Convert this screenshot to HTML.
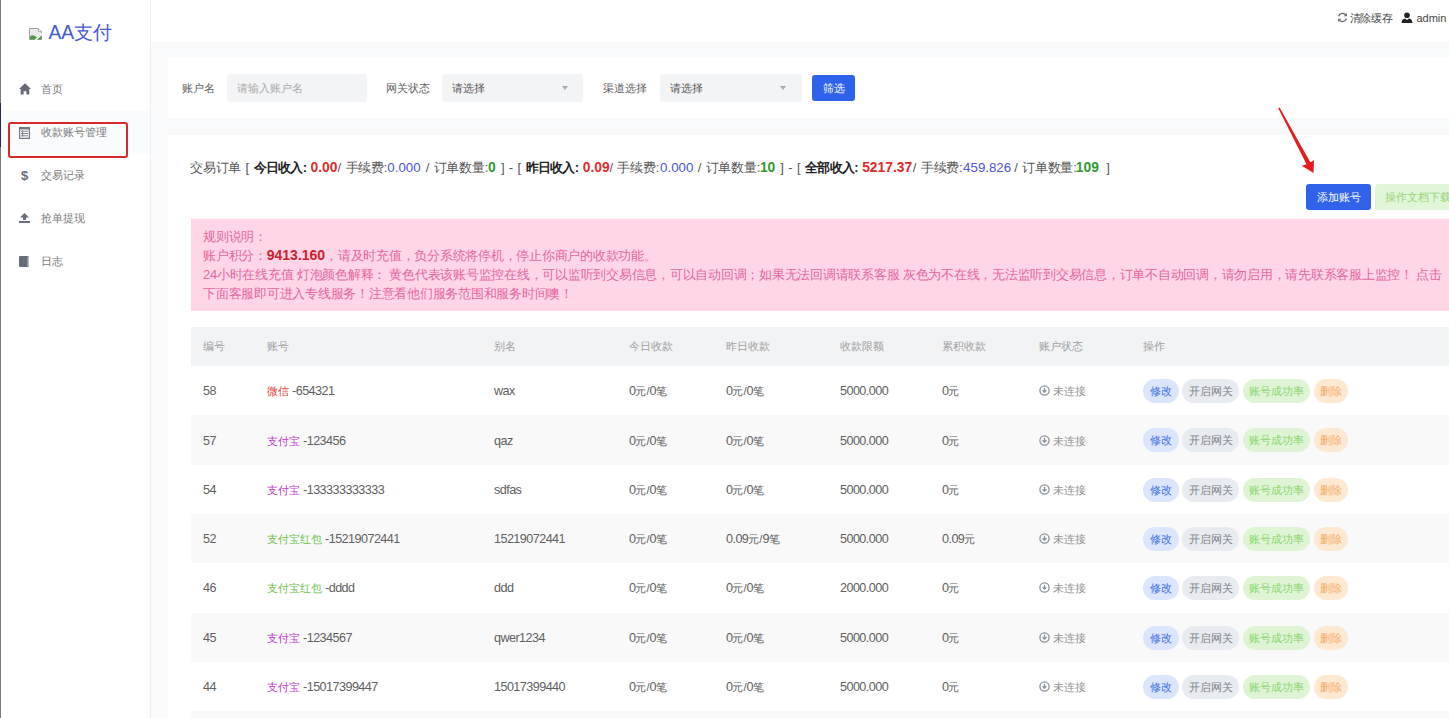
<!DOCTYPE html>
<html><head><meta charset="utf-8">
<style>
*{margin:0;padding:0;box-sizing:border-box}
html,body{width:1449px;height:718px;overflow:hidden;background:#fff;font-family:"Liberation Sans",sans-serif;color:#555}
.abs{position:absolute}
#leftline{position:absolute;left:0;top:0;width:1px;height:718px;background:#7a7a7a}
#side{position:absolute;left:1px;top:0;width:150px;height:718px;background:#fff;border-right:1px solid #f0f0f2}
#logo{position:absolute;left:47.5px;top:21px;font-size:19.3px;color:#4659d2;line-height:24px}
#bimg{position:absolute;left:28px;top:27.5px;width:13px;height:12px}
.nav{position:absolute;left:0;width:149px;height:43px;font-size:11px;color:#7a7a7a}
.nav .t{position:absolute;left:40px;top:0;line-height:43px}
.nav svg{position:absolute;left:17.5px;top:16px}
#header{position:absolute;left:151px;top:0;width:1298px;height:42px;background:#fff}
#content{position:absolute;left:151px;top:42px;width:1298px;height:676px;background:#f9fafc;border-top:6px solid #f9f9f9}
.card{position:absolute;background:#fff}
.lbl{position:absolute;font-size:11px;color:#606060;line-height:28px;top:74px}
.inp{position:absolute;top:74px;height:28px;background:#f3f4f6;border-radius:3px;font-size:11px;line-height:28px;padding-left:10px}
.tri{position:absolute;top:12px;width:0;height:0;border-left:3.5px solid transparent;border-right:3.5px solid transparent;border-top:4px solid #aaa}
.btn{position:absolute;border-radius:3px;font-size:11px;color:#fff;text-align:center}
#stats{position:absolute;left:0;top:158px;width:1449px;height:20px;font-size:13px;color:#555;line-height:20px;letter-spacing:-0.25px;word-spacing:1.25px}
.sc{position:absolute;top:0;white-space:pre}
.sc.red,.sc.grn{font-size:13.8px;letter-spacing:0}
.sc.blue{font-size:13.3px;letter-spacing:0}
#stats b{color:#222;letter-spacing:-0.7px}
.red{color:#e02b2b;font-weight:bold}
.blue{color:#4a55d8}
.grn{color:#2e9a2e;font-weight:bold}
#alert{position:absolute;left:191px;top:219px;width:1258px;height:92px;background:#ffd6e8;color:#e6679c;font-size:13px;letter-spacing:-0.25px;line-height:19px;padding:8px 0 0 12px;white-space:nowrap}
#alert b{color:#d0202e;font-size:14px;letter-spacing:0}
.thead{position:absolute;left:191px;width:1258px;height:39px;background:#f2f3f5}
.thead .c{position:absolute;top:0;line-height:39px;font-size:11px;color:#a0a0a0}
.tr{position:absolute;left:191px;width:1258px;height:49.3px;background:#fff}
.tr.alt{background:#f9f9f9}
.tr .c{position:absolute;top:1.3px;line-height:49px;font-size:11px;color:#606060;white-space:nowrap}
.tr .c i.n{font-style:normal;font-size:12.6px;letter-spacing:-0.55px}
.tr .c span{font-size:11px}
.tr .st{font-size:11px;color:#939393}
.tr .st svg{vertical-align:-1px}
.ops{position:absolute;top:13px;height:24px;white-space:nowrap;font-size:0}
.ops b{position:absolute;top:0;height:24px;line-height:24px;border-radius:12px;font-size:10.5px;font-weight:normal;text-align:center}
.b1{left:0;width:35.7px}.b2{left:39.2px;width:56.9px}.b3{left:99.5px;width:67.2px}.b4{left:171.3px;width:34.2px}
.b1{background:#dbe5fd;color:#3b6fe8}
.b2{background:#e8ebef;color:#7d838c}
.b3{background:#def4d5;color:#8bd46b}
.b4{background:#fde8d2;color:#f6aa62}
</style></head><body>
<div id="side">
  <svg id="bimg" viewBox="0 0 13 12"><path d="M0.5 0.5 H9.5 L12.5 3.5 V11.5 H0.5 Z" fill="#e9e9e9" stroke="#a0a0a0" stroke-width="1"/><path d="M1 11.5 V8.5 Q3 6.5 5 7.5 L8 9.5 L12.5 6 V11.5 Z" fill="#4f9a48"/><path d="M6 12.5 L13.5 5.5" stroke="#fff" stroke-width="1.4"/><path d="M9.5 0.5 V3.5 H12.5" fill="#fff" stroke="#a0a0a0" stroke-width="0.8"/></svg>
  <div id="logo">AA支付</div>
  <div class="nav" style="top:68px"><svg width="12" height="12" viewBox="0 0 12 12" style="left:17.5px;top:15px"><path d="M6 0.3 L12 6 H10.3 V11.5 H7.4 V8.2 H4.6 V11.5 H1.7 V6 H0 Z" fill="#666b76"/></svg><span class="t">首页</span></div>
  <div class="nav" style="top:111px;background:#fafbfc"><svg width="11" height="12" viewBox="0 0 11 12" style="left:17.5px;top:15.5px"><rect x="0.6" y="0.6" width="9.8" height="10.8" fill="none" stroke="#70757f" stroke-width="1.2"/><path d="M0.6 1.6h9.8" stroke="#70757f" stroke-width="1.6"/><path d="M2 4.2h7M2 6.5h7M2 8.8h7" stroke="#70757f" stroke-width="0.9"/><path d="M3.6 3.5v6" stroke="#70757f" stroke-width="0.9"/></svg><span class="t">收款账号管理</span></div>
  <div class="nav" style="top:154px"><svg width="11" height="12" viewBox="0 0 11 12" style="top:15px"><text x="5.5" y="10.5" text-anchor="middle" font-size="13" font-weight="bold" font-family="Liberation Sans" fill="#666b76">$</text></svg><span class="t">交易记录</span></div>
  <div class="nav" style="top:197px"><svg width="11" height="10" viewBox="0 0 11 10"><path d="M5.5 0 L10 4.5 H7 V7 H4 V4.5 H1Z M0 8 H11 V10 H0Z" fill="#666c78"/></svg><span class="t">抢单提现</span></div>
  <div class="nav" style="top:240px"><svg width="10" height="11" viewBox="0 0 10 11"><path d="M1 0 H9.5 V11 H1 Q0 11 0 10 V1 Q0 0 1 0Z" fill="#666c78"/><path d="M8.6 0.8 V10.2" stroke="#a8adb5" stroke-width="0.8"/></svg><span class="t">日志</span></div>
  <div class="abs" style="left:6.5px;top:122px;width:120px;height:36px;border:2px solid #d42a2a;border-radius:3px"></div>
</div>
<div id="leftline"></div><div class="abs" style="left:0;top:103px;width:1px;height:44px;background:#262a48"></div>
<div id="header">
  <div class="abs" style="left:1185.5px;top:11px;font-size:11px;color:#444;line-height:14px;white-space:nowrap">
    <svg width="11" height="11" viewBox="0 0 11 11" style="vertical-align:-1px"><path d="M9.2 3.5 A4.2 4.2 0 0 0 1.6 4.2 M1.8 7.5 A4.2 4.2 0 0 0 9.4 6.8" fill="none" stroke="#666" stroke-width="1.3"/><path d="M9.8 1 V4.2 H6.8Z M1.2 10 V6.8 H4.2Z" fill="#666"/></svg><span style="margin-left:2px;letter-spacing:-0.3px">清除缓存</span>
    <svg width="12" height="11" viewBox="0 0 12 11" style="vertical-align:-1px;margin-left:6px"><circle cx="6" cy="3.2" r="2.8" fill="#222"/><path d="M0.5 11 Q0.8 6.8 4 6.5 L6 8 L8 6.5 Q11.2 6.8 11.5 11Z" fill="#222"/></svg> admin
  </div>
</div>
<div id="content"></div>
<!-- filter card -->
<div class="card" style="left:168px;top:57px;width:1281px;height:61px"></div>
<span class="lbl" style="left:182px">账户名</span>
<div class="inp" style="left:227px;width:140px;color:#aaa">请输入账户名</div>
<span class="lbl" style="left:386px">网关状态</span>
<div class="inp" style="left:442px;width:141px;color:#555">请选择<i class="tri" style="left:120px"></i></div>
<span class="lbl" style="left:603px">渠道选择</span>
<div class="inp" style="left:660px;width:142px;color:#555">请选择<i class="tri" style="left:120px"></i></div>
<div class="btn" style="left:812px;top:75px;width:43px;height:26px;line-height:26px;background:#2f62ea">筛选</div>
<!-- main card -->
<div class="abs" style="left:168px;top:128px;width:1281px;height:7px;background:#f9f9f9"></div><div class="card" style="left:168px;top:135px;width:1281px;height:583px"></div>
<div id="stats"><span class="sc" style="left:190.0px">交易订单 [ <b>今日收入:</b> </span><span class="sc red" style="left:310.6px">0.00</span><span class="sc" style="left:337.6px">/ 手续费:</span><span class="sc blue" style="left:387.3px">0.000</span><span class="sc" style="right:960.9px"> / 订单数量:</span><span class="sc grn" style="left:487.9px">0</span><span class="sc" style="right:866.0px"> ] - [ <b>昨日收入:</b> </span><span class="sc red" style="left:582.8px">0.09</span><span class="sc" style="left:609.5px">/ 手续费:</span><span class="sc blue" style="left:660.1px">0.000</span><span class="sc" style="right:688.9px"> / 订单数量:</span><span class="sc grn" style="left:759.9px">10</span><span class="sc" style="right:586.6px"> ] - [ <b>全部收入:</b> </span><span class="sc red" style="left:862.2px">5217.37</span><span class="sc" style="left:912.8px">/ 手续费:</span><span class="sc blue" style="left:963.1px">459.826</span><span class="sc" style="right:372.5px"> / 订单数量:</span><span class="sc grn" style="left:1075.8px">109</span><span class="sc" style="left:1101.6px"> ]</span></div>
<div class="btn" style="left:1306px;top:184px;width:65px;height:26px;line-height:26px;background:#3063ea">添加账号</div>
<div class="btn" style="left:1375px;top:184px;width:90px;height:26px;line-height:26px;background:#e1f5d8;color:#97d477;text-align:left;padding-left:10px">操作文档下载</div>
<div id="alert">规则说明：<br>账户积分：<b>9413.160</b>，请及时充值，负分系统将停机，停止你商户的收款功能。<br>24小时在线充值 灯泡颜色解释： 黄色代表该账号监控在线，可以监听到交易信息，可以自动回调；如果无法回调请联系客服 灰色为不在线，无法监听到交易信息，订单不自动回调，请勿启用，请先联系客服上监控！ 点击<br>下面客服即可进入专线服务！注意看他们服务范围和服务时间噢！</div>
<div class="thead" style="top:327px"><span class="c" style="left:12px">编号</span><span class="c" style="left:76px">账号</span><span class="c" style="left:303px">别名</span><span class="c" style="left:438px">今日收款</span><span class="c" style="left:535px">昨日收款</span><span class="c" style="left:649px">收款限额</span><span class="c" style="left:751px">累积收款</span><span class="c" style="left:848px">账户状态</span><span class="c" style="left:952px">操作</span></div>
<div class="tr" style="top:366.0px"><span class="c" style="left:12px"><i class="n">58</i></span><span class="c" style="left:76px"><span style="color:#e0443c">微信</span> <i class="n">-654321</i></span><span class="c" style="left:303px"><i class="n">wax</i></span><span class="c" style="left:438px"><i class="n">0</i>元/<i class="n">0</i>笔</span><span class="c" style="left:535px"><i class="n">0</i>元/<i class="n">0</i>笔</span><span class="c" style="left:649px"><i class="n">5000.000</i></span><span class="c" style="left:751px"><i class="n">0</i>元</span><span class="c st" style="left:848px"><svg width="11" height="11" viewBox="0 0 11 11"><circle cx="5.5" cy="5.5" r="4.6" fill="none" stroke="#8a929c" stroke-width="1.3"/><path d="M5.5 2.8v4.2M3.6 5.3l1.9 1.9 1.9-1.9" fill="none" stroke="#8a929c" stroke-width="1.3"/></svg> 未连接</span><span class="ops" style="left:952px"><b class="b1">修改</b><b class="b2">开启网关</b><b class="b3">账号成功率</b><b class="b4">删除</b></span></div>
<div class="tr alt" style="top:415.3px"><span class="c" style="left:12px"><i class="n">57</i></span><span class="c" style="left:76px"><span style="color:#c03ccf">支付宝</span> <i class="n">-123456</i></span><span class="c" style="left:303px"><i class="n">qaz</i></span><span class="c" style="left:438px"><i class="n">0</i>元/<i class="n">0</i>笔</span><span class="c" style="left:535px"><i class="n">0</i>元/<i class="n">0</i>笔</span><span class="c" style="left:649px"><i class="n">5000.000</i></span><span class="c" style="left:751px"><i class="n">0</i>元</span><span class="c st" style="left:848px"><svg width="11" height="11" viewBox="0 0 11 11"><circle cx="5.5" cy="5.5" r="4.6" fill="none" stroke="#8a929c" stroke-width="1.3"/><path d="M5.5 2.8v4.2M3.6 5.3l1.9 1.9 1.9-1.9" fill="none" stroke="#8a929c" stroke-width="1.3"/></svg> 未连接</span><span class="ops" style="left:952px"><b class="b1">修改</b><b class="b2">开启网关</b><b class="b3">账号成功率</b><b class="b4">删除</b></span></div>
<div class="tr" style="top:464.6px"><span class="c" style="left:12px"><i class="n">54</i></span><span class="c" style="left:76px"><span style="color:#c03ccf">支付宝</span> <i class="n">-133333333333</i></span><span class="c" style="left:303px"><i class="n">sdfas</i></span><span class="c" style="left:438px"><i class="n">0</i>元/<i class="n">0</i>笔</span><span class="c" style="left:535px"><i class="n">0</i>元/<i class="n">0</i>笔</span><span class="c" style="left:649px"><i class="n">5000.000</i></span><span class="c" style="left:751px"><i class="n">0</i>元</span><span class="c st" style="left:848px"><svg width="11" height="11" viewBox="0 0 11 11"><circle cx="5.5" cy="5.5" r="4.6" fill="none" stroke="#8a929c" stroke-width="1.3"/><path d="M5.5 2.8v4.2M3.6 5.3l1.9 1.9 1.9-1.9" fill="none" stroke="#8a929c" stroke-width="1.3"/></svg> 未连接</span><span class="ops" style="left:952px"><b class="b1">修改</b><b class="b2">开启网关</b><b class="b3">账号成功率</b><b class="b4">删除</b></span></div>
<div class="tr alt" style="top:513.9px"><span class="c" style="left:12px"><i class="n">52</i></span><span class="c" style="left:76px"><span style="color:#6fc24a">支付宝红包</span> <i class="n">-15219072441</i></span><span class="c" style="left:303px"><i class="n">15219072441</i></span><span class="c" style="left:438px"><i class="n">0</i>元/<i class="n">0</i>笔</span><span class="c" style="left:535px"><i class="n">0.09</i>元/<i class="n">9</i>笔</span><span class="c" style="left:649px"><i class="n">5000.000</i></span><span class="c" style="left:751px"><i class="n">0.09</i>元</span><span class="c st" style="left:848px"><svg width="11" height="11" viewBox="0 0 11 11"><circle cx="5.5" cy="5.5" r="4.6" fill="none" stroke="#8a929c" stroke-width="1.3"/><path d="M5.5 2.8v4.2M3.6 5.3l1.9 1.9 1.9-1.9" fill="none" stroke="#8a929c" stroke-width="1.3"/></svg> 未连接</span><span class="ops" style="left:952px"><b class="b1">修改</b><b class="b2">开启网关</b><b class="b3">账号成功率</b><b class="b4">删除</b></span></div>
<div class="tr" style="top:563.2px"><span class="c" style="left:12px"><i class="n">46</i></span><span class="c" style="left:76px"><span style="color:#6fc24a">支付宝红包</span> <i class="n">-dddd</i></span><span class="c" style="left:303px"><i class="n">ddd</i></span><span class="c" style="left:438px"><i class="n">0</i>元/<i class="n">0</i>笔</span><span class="c" style="left:535px"><i class="n">0</i>元/<i class="n">0</i>笔</span><span class="c" style="left:649px"><i class="n">2000.000</i></span><span class="c" style="left:751px"><i class="n">0</i>元</span><span class="c st" style="left:848px"><svg width="11" height="11" viewBox="0 0 11 11"><circle cx="5.5" cy="5.5" r="4.6" fill="none" stroke="#8a929c" stroke-width="1.3"/><path d="M5.5 2.8v4.2M3.6 5.3l1.9 1.9 1.9-1.9" fill="none" stroke="#8a929c" stroke-width="1.3"/></svg> 未连接</span><span class="ops" style="left:952px"><b class="b1">修改</b><b class="b2">开启网关</b><b class="b3">账号成功率</b><b class="b4">删除</b></span></div>
<div class="tr alt" style="top:612.5px"><span class="c" style="left:12px"><i class="n">45</i></span><span class="c" style="left:76px"><span style="color:#c03ccf">支付宝</span> <i class="n">-1234567</i></span><span class="c" style="left:303px"><i class="n">qwer1234</i></span><span class="c" style="left:438px"><i class="n">0</i>元/<i class="n">0</i>笔</span><span class="c" style="left:535px"><i class="n">0</i>元/<i class="n">0</i>笔</span><span class="c" style="left:649px"><i class="n">5000.000</i></span><span class="c" style="left:751px"><i class="n">0</i>元</span><span class="c st" style="left:848px"><svg width="11" height="11" viewBox="0 0 11 11"><circle cx="5.5" cy="5.5" r="4.6" fill="none" stroke="#8a929c" stroke-width="1.3"/><path d="M5.5 2.8v4.2M3.6 5.3l1.9 1.9 1.9-1.9" fill="none" stroke="#8a929c" stroke-width="1.3"/></svg> 未连接</span><span class="ops" style="left:952px"><b class="b1">修改</b><b class="b2">开启网关</b><b class="b3">账号成功率</b><b class="b4">删除</b></span></div>
<div class="tr" style="top:661.8px"><span class="c" style="left:12px"><i class="n">44</i></span><span class="c" style="left:76px"><span style="color:#c03ccf">支付宝</span> <i class="n">-15017399447</i></span><span class="c" style="left:303px"><i class="n">15017399440</i></span><span class="c" style="left:438px"><i class="n">0</i>元/<i class="n">0</i>笔</span><span class="c" style="left:535px"><i class="n">0</i>元/<i class="n">0</i>笔</span><span class="c" style="left:649px"><i class="n">5000.000</i></span><span class="c" style="left:751px"><i class="n">0</i>元</span><span class="c st" style="left:848px"><svg width="11" height="11" viewBox="0 0 11 11"><circle cx="5.5" cy="5.5" r="4.6" fill="none" stroke="#8a929c" stroke-width="1.3"/><path d="M5.5 2.8v4.2M3.6 5.3l1.9 1.9 1.9-1.9" fill="none" stroke="#8a929c" stroke-width="1.3"/></svg> 未连接</span><span class="ops" style="left:952px"><b class="b1">修改</b><b class="b2">开启网关</b><b class="b3">账号成功率</b><b class="b4">删除</b></span></div>
<div class="tr alt" style="top:711.1px"></div>
<svg class="abs" style="left:1270px;top:100px" width="60" height="80" viewBox="0 0 60 80"><path d="M8.2 8.2 L36.5 64.2 L31.8 65.8 L43.5 73 L44 60.2 L40.3 62.2 L9.6 7.4 Z" fill="#e61c1c"/></svg>
</body></html>
